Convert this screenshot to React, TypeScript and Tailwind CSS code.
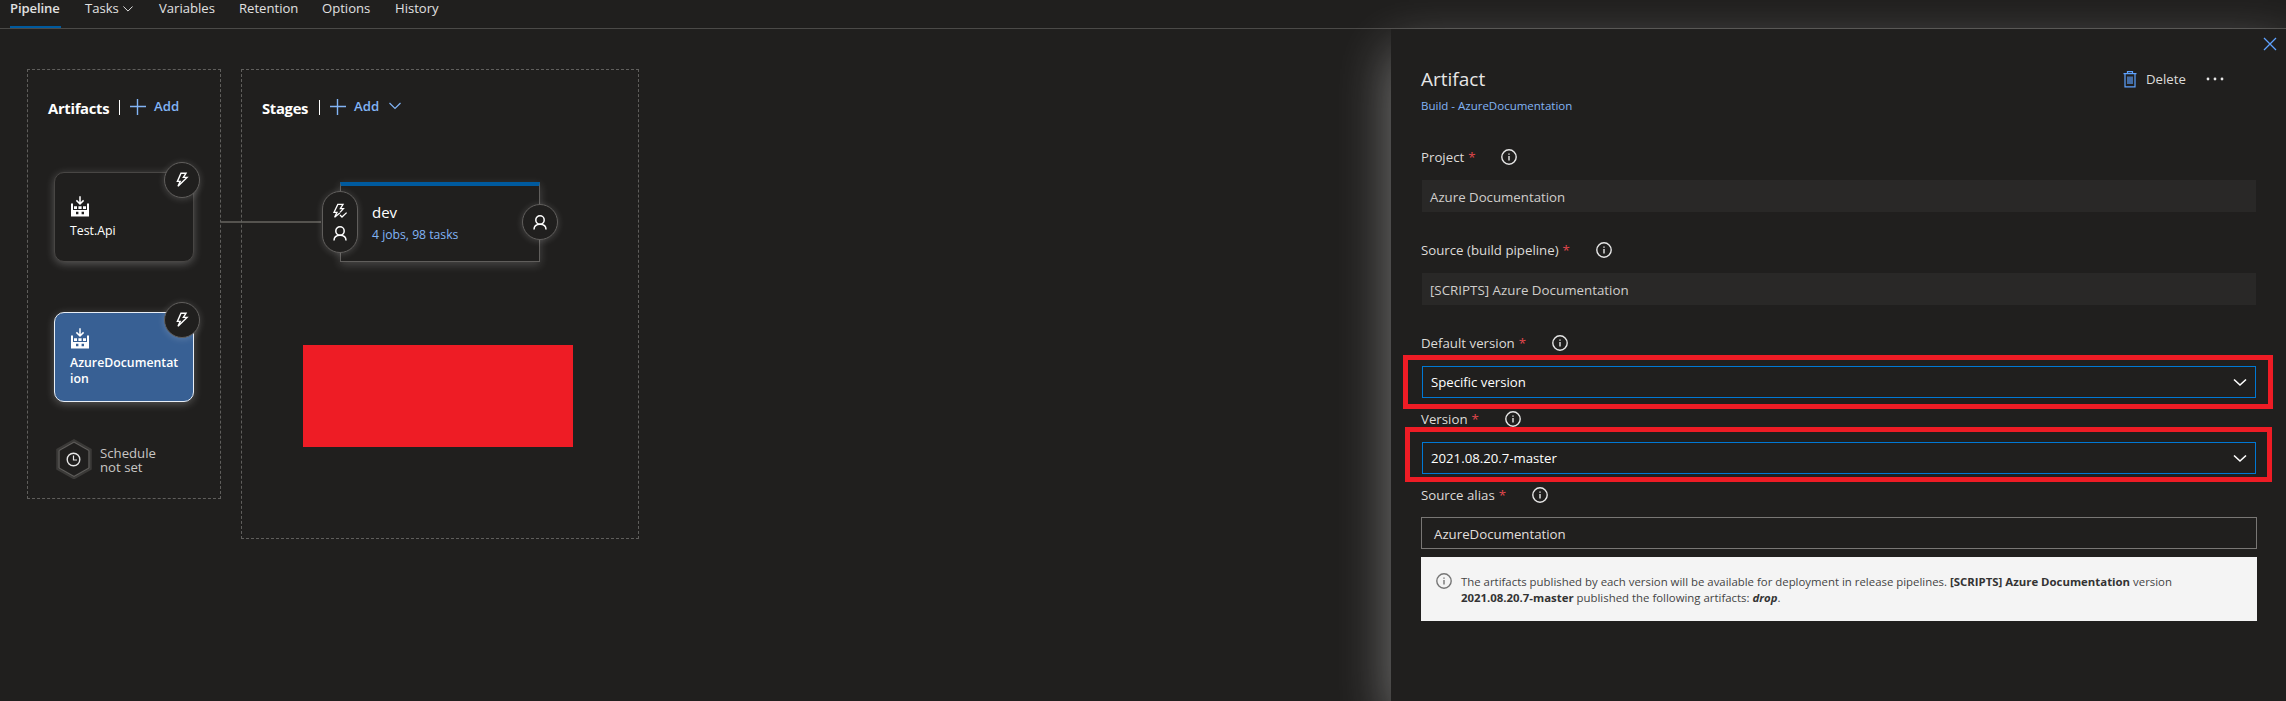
import type { ReactNode } from "react";

const Chevron = ({ className = "" }: { className?: string }) => (
  <svg className={className} width="12" height="8" viewBox="0 0 12 8" fill="none" stroke="currentColor" strokeWidth="1.2">
    <path d="M0.5 1L6 6.5L11.5 1" />
  </svg>
);

const Plus = () => (
  <svg width="16" height="16" viewBox="0 0 16 16" fill="none" stroke="currentColor" strokeWidth="1.4">
    <path d="M7.5 0V16M0 7.5H16" />
  </svg>
);

const Bolt = () => (
  <svg width="14" height="16" viewBox="0 0 14 16" fill="none" stroke="white" strokeWidth="1.4" strokeLinejoin="miter">
    <path d="M6 1.3H11L8.4 5.4H12L3 14.2L5.2 9.4H2.4L6 1.3Z" />
  </svg>
);

const BoltCheck = () => (
  <svg width="16" height="16" viewBox="0 0 16 16" fill="none" stroke="white" strokeWidth="1.3">
    <path d="M7.8 10L2.6 14.2L5 9.4H2L5.8 1.4H11L8.4 5.6H11.4L8 9.4" />
    <path d="M8 12L10 14L14.6 9.6" />
  </svg>
);

const Person = () => (
  <svg width="14" height="15" viewBox="0 0 14 15" fill="none" stroke="white" strokeWidth="1.5">
    <circle cx="7" cy="5" r="4.2" />
    <path d="M1 14.6C1 11.2 3.2 9.2 7 9.2C10.8 9.2 13 11.2 13 14.6" />
  </svg>
);

const BuildIcon = () => (
  <svg width="18" height="21" viewBox="0 0 18 21">
    <path fill="white" fillRule="evenodd" d="M0 7.5H2V14H16V7.5H18V20.5H0ZM5 15.8V18.2H7.4V15.8ZM10.6 15.8V18.2H13V15.8Z" />
    <path fill="white" d="M3 10.2H6V13H3ZM7.4 10.2H10.6V13H7.4ZM12 10.2H15V13H12Z" />
    <path d="M9 0.3V7.6M5.4 4.4L9 8L12.6 4.4" fill="none" stroke="white" strokeWidth="1.5" />
  </svg>
);

const InfoIcon = ({ className = "" }: { className?: string }) => (
  <svg className={className} width="16" height="16" viewBox="0 0 16 16" fill="none" stroke="currentColor">
    <circle cx="8" cy="8" r="7.2" strokeWidth="1.4" />
    <path d="M8 7V11.5M8 4.4V5.8" strokeWidth="1.4" />
  </svg>
);

const ScheduleIcon = () => (
  <svg width="36" height="40" viewBox="0 0 36 40" fill="none">
    <path d="M18 2L34 11V29.5L18 38.5L2 29.5V11Z" stroke="#3b3a38" strokeWidth="3.5" />
    <path d="M18 3L33 11.5V29L18 37.5L3 29V11.5Z" stroke="#605e5c" />
    <circle cx="17.5" cy="20.5" r="6.3" stroke="#e6e6e6" strokeWidth="1.4" />
    <path d="M17.5 16.5V21H21" stroke="#e6e6e6" strokeWidth="1.2" />
  </svg>
);

const TrashIcon = () => (
  <svg width="14" height="17" viewBox="0 0 14 17" fill="none" stroke="#5ea2ff" strokeWidth="1.2">
    <path d="M0.5 2.6H13.5M4.5 2.4V0.6H9.5V2.4M2 2.8V15.8H12V2.8M5 5.4V13M7 5.4V13M9 5.4V13" />
  </svg>
);

const tabs = [
  { label: "Variables", className: "ml-[28px] w-[55px]" },
  { label: "Retention", className: "ml-[25px] w-[59px]" },
  { label: "Options", className: "ml-[24px] w-[49px]" },
  { label: "History", className: "ml-[24px] w-[44px]" },
];

function TopTabs() {
  return (
    <nav className="flex h-[29px] shrink-0 border-b border-[#4b4a48] pl-[10px] text-[13.1px] leading-4 text-[#e1e1e1]">
      <span className="h-[28px] w-[51px] border-b-2 border-[#005a9e] font-semibold whitespace-nowrap tracking-[-0.1px]">Pipeline</span>
      <span className="ml-[24px] flex w-[46px] gap-[4px] whitespace-nowrap">
        Tasks
        <Chevron className="mt-[5px] w-[10px] shrink-0" />
      </span>
      {tabs.map((t) => (
        <span key={t.label} className={`whitespace-nowrap ${t.className}`}>{t.label}</span>
      ))}
    </nav>
  );
}

function GroupTitle({ title, chevron, titleWidth }: { title: string; chevron?: boolean; titleWidth: string }) {
  return (
    <div className="flex h-[49px] items-start pl-[20px] pt-[28px] text-[13.2px] leading-5">
      <h2 className={`text-[14.8px] leading-5 font-bold whitespace-nowrap tracking-[-0.3px] text-white ${titleWidth}`}>{title}</h2>
      <span className="ml-[10px] mt-[2px] h-[15px] w-px bg-white" />
      <span className="ml-[10px] mt-px flex text-[#82b4f5]">
        <Plus />
        <span className="-mt-[3px] ml-[8px] w-[26px] font-semibold">Add</span>
        {chevron && <Chevron className="ml-[9px] mt-[3px]" />}
      </span>
    </div>
  );
}

const glow = "shadow-[0_2px_9px_rgba(255,255,255,0.25)]";

function ArtifactCard({ name, selected, className }: { name: string; selected?: boolean; className: string }) {
  return (
    <div className={`relative flex h-[90px] w-[140px] flex-col rounded-[10px] border pl-[16px] text-[12.3px] leading-4 text-white ${glow} ${selected ? "border-[#e8eef6] bg-[#386094] pt-[15px] font-semibold" : "border-[#484644] bg-[#201f1e] pt-[23px]"} ${className}`}>
      <BuildIcon />
      <span className="mt-[6px] -ml-px w-[110px] leading-4 break-all">{name}</span>
      <span className="absolute -top-[11px] left-[109px] flex h-[36px] w-[36px] items-center justify-center rounded-full border border-[#605e5c] bg-[#201f1e] shadow-[0_1px_7px_rgba(255,255,255,0.18)]">
        <Bolt />
      </span>
    </div>
  );
}

function Canvas() {
  return (
    <main className="relative flex grow items-start pl-[27px] pt-[40px]">
      <section className="h-[430px] w-[194px] border border-dashed border-[#5f5e5c]">
        <GroupTitle title="Artifacts" titleWidth="w-[61px]" />
        <ArtifactCard name="Test.Api" className="mt-[53px] ml-[26px]" />
        <ArtifactCard name="AzureDocumentation" selected className="mt-[50px] ml-[26px]" />
        <div className="mt-[37px] ml-[28px] flex">
          <ScheduleIcon />
          <p className="ml-[8px] mt-[7px] text-[13.2px] leading-[14px] text-[#c8c6c4]">
            Schedule
            <br />
            not set
          </p>
        </div>
      </section>
      <span className="mt-[152px] -mr-[80px] h-[2px] w-[100px] shrink-0 bg-[#55534f]" />
      <section className="h-[470px] w-[398px] border border-dashed border-[#5f5e5c]">
        <GroupTitle title="Stages" titleWidth="w-[47px]" chevron />
        <div className="relative mt-[63px] ml-[98px] h-[80px] w-[200px] border border-t-4 border-[#605e5c] border-t-[#005a9e] bg-[#201f1e] pt-[16px] pl-[31px] shadow-[0_3px_9px_rgba(255,255,255,0.18)]">
          <div className="text-[15px] leading-5 text-white">dev</div>
          <div className="mt-[3px] text-[12.2px] leading-5 whitespace-nowrap text-[#82b4f5]">4 jobs, 98 tasks</div>
          <span className="absolute top-[5px] -left-[19px] flex h-[62px] w-[36px] flex-col items-center justify-center gap-[7px] rounded-full border border-[#605e5c] bg-[#201f1e] shadow-[0_1px_7px_rgba(255,255,255,0.18)]">
            <BoltCheck />
            <Person />
          </span>
          <span className="absolute top-[18px] left-[181px] flex h-[36px] w-[36px] items-center justify-center rounded-full border border-[#605e5c] bg-[#201f1e] shadow-[0_1px_7px_rgba(255,255,255,0.18)]">
            <Person />
          </span>
        </div>
        <div className="mt-[83px] ml-[61px] h-[102px] w-[270px] bg-[#ee1c25]" />
      </section>
    </main>
  );
}

function Label({ children, className = "" }: { children: ReactNode; className?: string }) {
  return (
    <div className={`flex h-[20px] text-[13.25px] leading-5 whitespace-nowrap text-[#dddbd9] ${className}`}>
      <span>{children}</span>
      <span className="ml-[4px] w-[6px] text-[#e0474c]">*</span>
      <InfoIcon className="mt-[2px] ml-[27px] text-[#e6e6e6]" />
    </div>
  );
}

function Select({ value, frame }: { value: string; frame: string }) {
  return (
    <div className="relative ml-px flex h-[32px] w-[834px] items-center justify-between border border-[#0078d4] pr-[8px] pl-[8px] text-[13.2px] text-white">
      <span className="mt-[2px]">{value}</span>
      <svg width="14" height="9" viewBox="0 0 14 9" fill="none" stroke="white" strokeWidth="1.6">
        <path d="M1 1.5L7 7L13 1.5" />
      </svg>
      <span className={`absolute border-[5px] border-[#ee1c25] ${frame}`} />
    </div>
  );
}

function ArtifactPanel() {
  return (
    <aside className="relative flex h-[672px] w-[895px] shrink-0 flex-col bg-[#201f1e] pl-[30px] shadow-[0_22px_50px_rgba(255,255,255,0.4)]">
      <div className="flex h-[32px] justify-end pt-[8px] pr-[9px]">
        <svg width="14" height="14" viewBox="0 0 14 14" stroke="#5ea2ff" strokeWidth="1.3">
          <path d="M1 1L13 13M13 1L1 13" />
        </svg>
      </div>
      <header className="flex h-[34px] items-start">
        <h1 className="mt-[4px] text-[19px] leading-7 text-[#e6e6e6]">Artifact</h1>
        <div className="ml-auto flex pr-[62px] text-[13.2px] leading-5 text-[#dddbd9]">
          <span className="mt-[10px]"><TrashIcon /></span>
          <span className="mt-[8px] ml-[9px] w-[40px]">Delete</span>
          <svg className="mt-[16px] ml-[20px]" width="18" height="4" viewBox="0 0 18 4" fill="#e6e6e6">
            <circle cx="2" cy="2" r="1.4" />
            <circle cx="9" cy="2" r="1.4" />
            <circle cx="16" cy="2" r="1.4" />
          </svg>
        </div>
      </header>
      <a className="mt-[3px] h-[16px] text-[11.5px] leading-4 text-[#82b4f5]">Build - AzureDocumentation</a>
      <Label className="mt-[33px]">Project</Label>
      <div className="mt-[13px] ml-px h-[32px] w-[834px] bg-[#292827] pl-[8px] text-[13.25px] leading-[34px] text-[#d0cecc]">Azure Documentation</div>
      <Label className="mt-[28px]">Source (build pipeline)</Label>
      <div className="mt-[13px] ml-px h-[32px] w-[834px] bg-[#292827] pl-[8px] text-[13.35px] leading-[34px] text-[#d0cecc]">[SCRIPTS] Azure Documentation</div>
      <Label className="mt-[28px]">Default version</Label>
      <div className="mt-[13px]"><Select value="Specific version" frame="-top-[12px] -left-[20px] h-[54px] w-[870px]" /></div>
      <Label className="mt-[11px]">Version</Label>
      <div className="mt-[13px]"><Select value="2021.08.20.7-master" frame="-top-[16px] -left-[18px] h-[55px] w-[867px]" /></div>
      <Label className="mt-[11px]">Source alias</Label>
      <div className="mt-[12px] h-[32px] w-[836px] border border-[#797775] pl-[12px] text-[13.25px] leading-[33px] text-[#e1dfdd]">AzureDocumentation</div>
      <div className="mt-[8px] flex h-[64px] w-[836px] bg-[#f4f4f4] pt-[16px] pl-[15px] text-[11.4px] leading-4 text-[#444]">
        <InfoIcon className="text-[#767676]" />
        <p className="ml-[9px] mt-[1px] whitespace-nowrap">
          <span>The artifacts published by each version will be available for deployment in release pipelines. </span>
          <b className="font-bold text-[#333]">[SCRIPTS] Azure Documentation</b> version
          <br />
          <b className="font-bold text-[#333]">2021.08.20.7-master</b> published the following artifacts: <b className="font-bold text-[#333] italic">drop</b>.
        </p>
      </div>
    </aside>
  );
}

export default function App() {
  return (
    <div className="flex h-[701px] w-[2286px] flex-col overflow-hidden bg-[#201f1e] font-['Open_Sans','Noto_Sans',sans-serif]">
      <TopTabs />
      <div className="flex grow">
        <Canvas />
        <ArtifactPanel />
      </div>
    </div>
  );
}
